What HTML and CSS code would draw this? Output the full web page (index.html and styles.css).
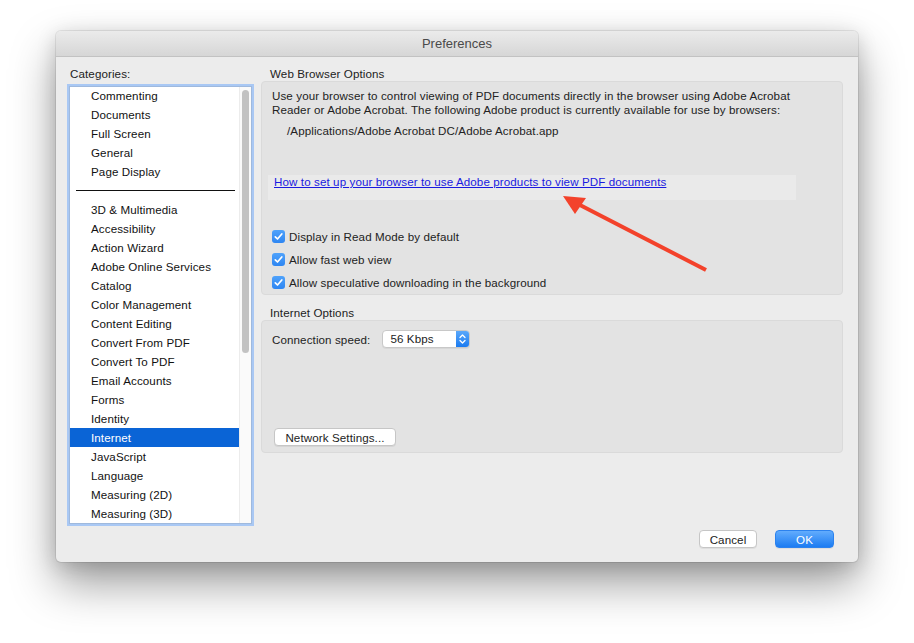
FILE: index.html
```html
<!DOCTYPE html>
<html lang="en">
<head>
  <meta charset="UTF-8">
  <title>Preferences</title>
  <link rel="stylesheet" href="styles.css">
</head>
<body>

<div class="window">
  <div class="titlebar">Preferences</div>

  <div class="main">
    <div class="left">
      <div class="label">Categories:</div>
      <div class="list">
        <div class="rows">
          <div class="row">Commenting</div>
          <div class="row">Documents</div>
          <div class="row">Full Screen</div>
          <div class="row">General</div>
          <div class="row">Page Display</div>
          <div class="sep"></div>
          <div class="row">3D &amp; Multimedia</div>
          <div class="row">Accessibility</div>
          <div class="row">Action Wizard</div>
          <div class="row">Adobe Online Services</div>
          <div class="row">Catalog</div>
          <div class="row">Color Management</div>
          <div class="row">Content Editing</div>
          <div class="row">Convert From PDF</div>
          <div class="row">Convert To PDF</div>
          <div class="row">Email Accounts</div>
          <div class="row">Forms</div>
          <div class="row">Identity</div>
          <div class="row selected">Internet</div>
          <div class="row">JavaScript</div>
          <div class="row">Language</div>
          <div class="row">Measuring (2D)</div>
          <div class="row">Measuring (3D)</div>
        </div>
        <div class="scrollbar"><div class="thumb"></div></div>
      </div>
    </div>

    <div class="right">
      <div class="label group-label">Web Browser Options</div>
      <div class="panel browser">
        <p class="desc">Use your browser to control viewing of PDF documents directly in the browser using Adobe Acrobat Reader or Adobe Acrobat. The following Adobe product is currently available for use by browsers:</p>
        <p class="path">/Applications/Adobe Acrobat DC/Adobe Acrobat.app</p>
        <div class="linkbox"><a href="#">How to set up your browser to use Adobe products to view PDF documents</a></div>
        <div class="checks">
          <div class="check"><span class="box"><svg viewBox="0 0 13 13" width="13" height="13"><path d="M3.3 6.8 L5.5 9 L9.8 4" fill="none" stroke="#fff" stroke-width="1.7" stroke-linecap="round" stroke-linejoin="round"/></svg></span>Display in Read Mode by default</div>
          <div class="check"><span class="box"><svg viewBox="0 0 13 13" width="13" height="13"><path d="M3.3 6.8 L5.5 9 L9.8 4" fill="none" stroke="#fff" stroke-width="1.7" stroke-linecap="round" stroke-linejoin="round"/></svg></span>Allow fast web view</div>
          <div class="check"><span class="box"><svg viewBox="0 0 13 13" width="13" height="13"><path d="M3.3 6.8 L5.5 9 L9.8 4" fill="none" stroke="#fff" stroke-width="1.7" stroke-linecap="round" stroke-linejoin="round"/></svg></span>Allow speculative downloading in the background</div>
        </div>
      </div>

      <div class="label group-label second">Internet Options</div>
      <div class="panel internet">
        <div class="speed">
          <span>Connection speed:</span>
          <div class="select">
            <span class="value">56 Kbps</span>
            <span class="stepper"><svg viewBox="0 0 13 18" width="13" height="18"><path d="M4 7.5 L6.5 5 L9 7.5 M4 10.5 L6.5 13 L9 10.5" fill="none" stroke="#fff" stroke-width="1.3" stroke-linecap="round" stroke-linejoin="round"/></svg></span>
          </div>
        </div>
        <button class="btn network">Network Settings...</button>
      </div>
    </div>
  </div>

  <div class="footer">
    <button class="btn cancel">Cancel</button>
    <button class="btn ok">OK</button>
  </div>
</div>

<svg class="arrow" width="914" height="643" viewBox="0 0 914 643">
  <line x1="706" y1="270" x2="578" y2="204" stroke="#f3422b" stroke-width="4"/>
  <polygon points="563,196 586,198 575,214" fill="#f3422b"/>
</svg>

</body>
</html>
```

FILE: styles.css
```css
* { box-sizing: border-box; }

body {
  margin: 0;
  min-height: 643px;
  padding-top: 31px;
  background: #fff;
  font-family: "Liberation Sans", Arial, sans-serif;
  font-size: 11.6px;
  letter-spacing: 0.1px;
  color: #222;
}

.window {
  margin-left: 56px;
  width: 802px;
  height: 531px;
  background: #ececec;
  border-radius: 5px;
  box-shadow: 0 22px 45px rgba(0, 0, 0, 0.38), 0 4px 20px rgba(0, 0, 0, 0.15), 0 0 0 1px rgba(0, 0, 0, 0.08);
  display: flex;
  flex-direction: column;
  overflow: hidden;
}

.titlebar {
  height: 26px;
  line-height: 25px;
  text-align: center;
  font-size: 13px;
  letter-spacing: 0;
  color: #4a4a4a;
  background: linear-gradient(#ebebeb, #d6d6d6);
  border-bottom: 1px solid #c2c2c2;
}

.main {
  display: flex;
  gap: 9px;
  padding: 10px 15px 0 11px;
}

.label {
  height: 19px;
  line-height: 14px;
  padding-left: 3px;
  color: #222;
}

.left { width: 185px; }

.list {
  height: 438px;
  background: #fff;
  border: 1px solid #9fb9dd;
  box-shadow: 0 0 0 2px #a9c8f4;
  margin-left: 2px;
  display: flex;
  overflow: hidden;
}

.rows {
  flex: 1;
  margin-top: -1px;
}

.row {
  height: 19px;
  line-height: 19px;
  padding-left: 21px;
  color: #111;
}

.row.selected {
  background: #0a64d6;
  color: #fff;
}

.sep {
  height: 19px;
  position: relative;
}

.sep::after {
  content: "";
  position: absolute;
  left: 6px;
  right: 4px;
  top: 9px;
  border-top: 1px solid #111;
}

.scrollbar {
  width: 12px;
  background: #fafafa;
  border-left: 1px solid #ececec;
}

.thumb {
  width: 7px;
  height: 263px;
  margin: 3px 0 0 2px;
  background: #c2c2c2;
  border-radius: 4px;
}

.right { flex: 1; }

.group-label {
  padding-left: 9px;
  height: 14px;
}

.group-label.second { margin-top: 11px; }

.panel {
  background: #e3e3e3;
  border: 1px solid #dadada;
  border-radius: 4px;
}

.browser {
  height: 214px;
  padding: 7px 10px 0 10px;
}

.desc {
  margin: 0;
  line-height: 14px;
  width: 530px;
}

.path {
  margin: 7px 0 0 15px;
  line-height: 14px;
}

.linkbox {
  margin: 37px 36px 0 -4px;
  height: 25px;
  background: #eaeaea;
  padding: 0 6px;
  line-height: 14px;
}

.linkbox a { color: #1a1ae0; }

.checks {
  margin-top: 29px;
  display: flex;
  flex-direction: column;
  gap: 9px;
}

.check {
  display: flex;
  align-items: center;
  gap: 4px;
  height: 14px;
}

.box {
  width: 13px;
  height: 13px;
  border-radius: 3px;
  background: linear-gradient(#4fa2fb, #2e86f2);
  display: flex;
}

.internet {
  height: 133px;
  padding: 0 10px;
  display: flex;
  flex-direction: column;
}

.speed {
  display: flex;
  align-items: center;
  gap: 12px;
  margin-top: 9px;
}

.select {
  width: 88px;
  height: 18px;
  background: #fff;
  border: 1px solid #c8c8c8;
  border-radius: 4px;
  display: flex;
  justify-content: space-between;
  overflow: hidden;
  box-shadow: 0 1px 0 rgba(0, 0, 0, 0.05);
}

.value {
  padding-left: 7px;
  line-height: 16px;
}

.stepper {
  width: 13px;
  background: linear-gradient(#5aa8fb, #1b7bf0);
  display: flex;
  align-items: center;
}

.btn {
  font-family: "Liberation Sans", Arial, sans-serif;
  font-size: 11.6px;
  letter-spacing: 0.1px;
  color: #222;
  background: #fff;
  border: 1px solid #c6c6c6;
  border-radius: 4px;
  height: 18px;
  padding: 0;
  box-shadow: 0 1px 0 rgba(0, 0, 0, 0.06);
}

.network {
  width: 122px;
  margin: auto 0 6px 2px;
}

.footer {
  display: flex;
  justify-content: flex-end;
  gap: 18px;
  padding: 6px 24px 0 0;
}

.cancel { width: 58px; }

.ok {
  width: 59px;
  color: #fff;
  border: 1px solid #2c82ee;
  background: linear-gradient(#62acfd, #1c7cf2);
}

.arrow {
  position: absolute;
  left: 0;
  top: 0;
  pointer-events: none;
}
```
